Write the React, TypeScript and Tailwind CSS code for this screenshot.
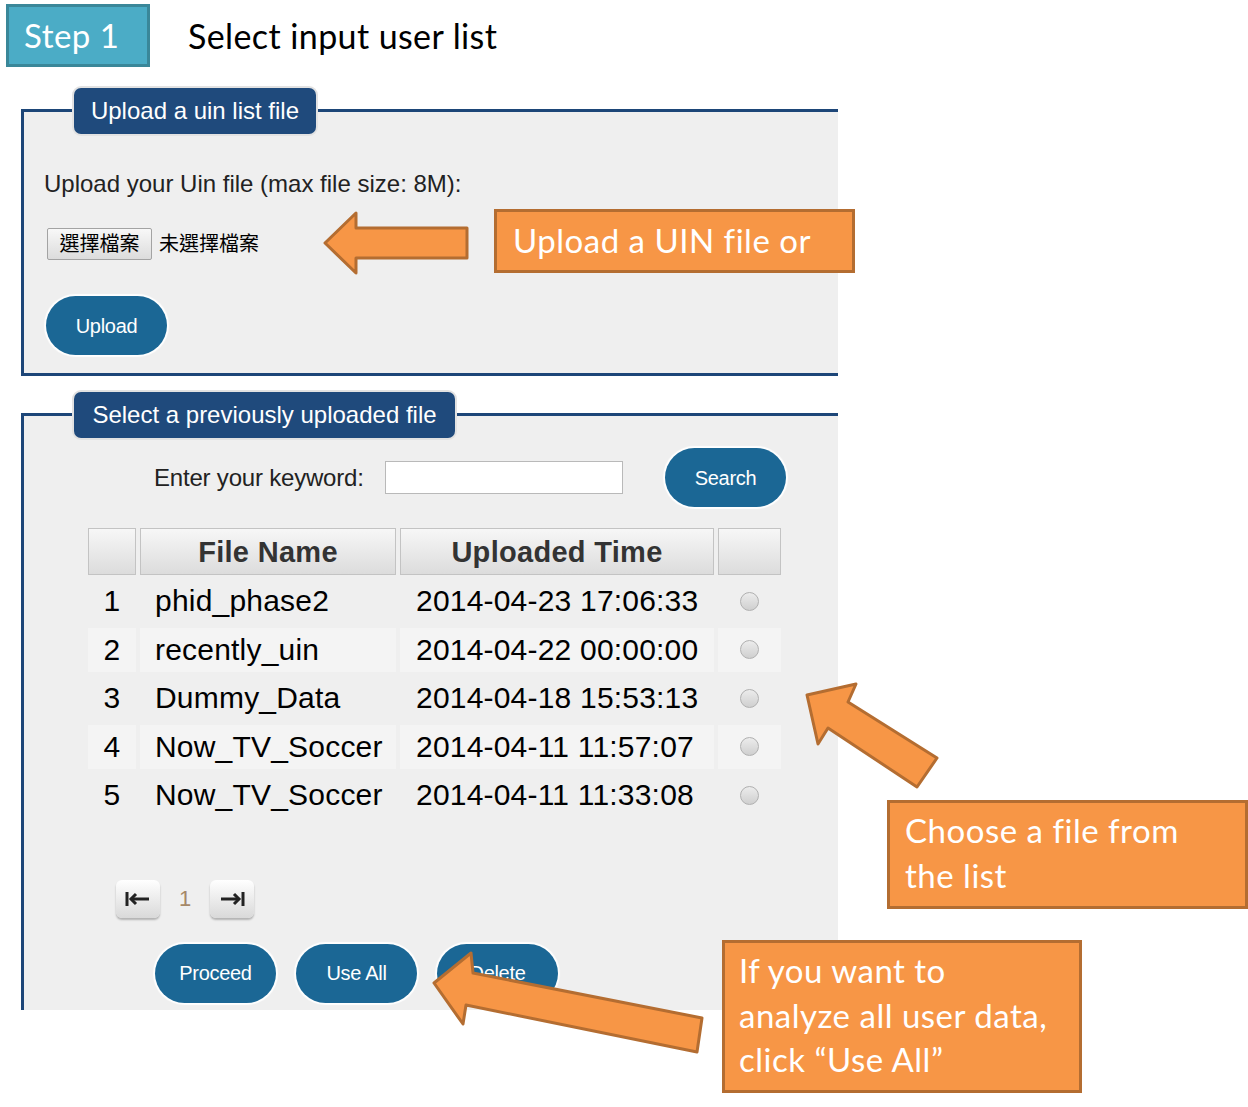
const rows = [
  ["1", "phid_phase2", "2014-04-23 17:06:33"],
  ["2", "recently_uin", "2014-04-22 00:00:00"],
  ["3", "Dummy_Data", "2014-04-18 15:53:13"],
  ["4", "Now_TV_Soccer", "2014-04-11 11:57:07"],
  ["5", "Now_TV_Soccer", "2014-04-11 11:33:08"],
];

function Pill({ label, className = "" }: { label: string; className?: string }) {
  return (
    <button
      className={
        "w-[121px] h-[59px] rounded-full bg-[#1b6795] text-white text-[20px] tracking-[-0.3px] shadow-[0_0_1px_2px_rgba(255,255,255,0.95)] " +
        className
      }
    >
      {label}
    </button>
  );
}

function Legend({ label, width }: { label: string; width: string }) {
  return (
    <div
      className={
        "ml-[50px] -mt-[24px] h-[46px] rounded-[7px] bg-[#1f4a7c] text-white text-[24px] flex items-center justify-center shadow-[0_0_0_2px_#e2e2e2] " +
        width
      }
    >
      {label}
    </div>
  );
}

function PageButton({ dir }: { dir: "first" | "last" }) {
  return (
    <div className="w-[44px] h-[38px] rounded-[6px] bg-linear-to-b from-[#ffffff] to-[#d9d9d9] shadow-[0_2px_2px_rgba(0,0,0,0.25)] flex items-center justify-center">
      <svg width="26" height="16" viewBox="0 0 26 16">
        {dir === "first" ? (
          <g stroke="#222" strokeWidth="3" fill="none">
            <path d="M2 1v14" />
            <path d="M6 8h18" />
            <path d="M11 3l-5 5 5 5" />
          </g>
        ) : (
          <g stroke="#222" strokeWidth="3" fill="none">
            <path d="M24 1v14" />
            <path d="M2 8h18" />
            <path d="M15 3l5 5-5 5" />
          </g>
        )}
      </svg>
    </div>
  );
}

function Callout({ lines, className }: { lines: string[]; className: string }) {
  return (
    <div
      className={
        "absolute bg-[#f79646] border-[3px] border-[#b46d31] text-white text-[33px] tracking-[0.5px] leading-[44.5px] font-['Lato',sans-serif] " +
        className
      }
    >
      {lines.map((l) => (
        <div key={l}>{l}</div>
      ))}
    </div>
  );
}

export default function App() {
  return (
    <div className="relative w-[1248px] h-[1107px] bg-white overflow-hidden font-['Liberation_Sans',Arial,sans-serif] text-[#222]">
      {/* step header */}
      <div className="flex items-center pt-[4px] pl-[6px]">
        <div className="w-[144px] h-[63px] bg-[#4bacc6] border-[3px] border-[#3a8799] flex items-center pl-[15px] text-white text-[33px] tracking-[0.5px] font-['Lato',sans-serif]">
          Step 1
        </div>
        <div className="ml-[38px] text-[34px] tracking-[0.4px] text-black font-['Lato',sans-serif]">Select input user list</div>
      </div>

      <div className="ml-[21px] w-[817px] mt-[42px]">
        {/* upload panel */}
        <div className="border-t-[3px] border-l-[3px] border-b-[3px] border-[#1d4678] bg-[#efefef] pb-[18px]">
          <Legend label="Upload a uin list file" width="w-[242px]" />
          <p className="ml-[20px] mt-[36px] text-[24px] leading-[28px]">
            Upload your Uin file (max file size: 8M):
          </p>
          <div className="flex items-center ml-[23px] mt-[30px] font-['Liberation_Sans','Noto_Sans_CJK_TC',sans-serif] text-[20px] text-black">
            <span className="w-[105px] h-[32px] flex items-center justify-center border border-[#a3a3a3] rounded-[2px] bg-linear-to-b from-[#f8f8f8] to-[#dcdcdc]">
              選擇檔案
            </span>
            <span className="ml-[7px]">未選擇檔案</span>
          </div>
          <Pill label="Upload" className="ml-[22px] mt-[36px] block" />
        </div>

        {/* previous files panel */}
        <div className="mt-[37px] border-t-[3px] border-l-[3px] border-[#1d4678] bg-[#efefef] pb-[7px]">
          <Legend label="Select a previously uploaded file" width="w-[381px]" />
          <div className="flex items-center ml-[130px] mt-[10px]">
            <span className="w-[211px] text-[24px] tracking-[-0.2px] whitespace-nowrap">Enter your keyword:</span>
            <div className="ml-[20px] w-[238px] h-[33px] bg-white border border-[#b9b9b9]" />
            <Pill label="Search" className="ml-[42px]" />
          </div>

          <table className="ml-[60px] mt-[17px] table-fixed border-separate border-spacing-[4px] text-black">
            <thead>
              <tr>
                {["w-[48px]", "w-[256px]", "w-[314px]", "w-[63px]"].map((w, i) => (
                  <th
                    key={w}
                    className={
                      w +
                      " h-[47px] p-0 border border-[#c3c3c3] bg-linear-to-b from-[#f7f7f7] to-[#dcdcdc] text-[29px] leading-[34px] tracking-[0.3px] font-bold text-[#333]"
                    }
                  >
                    {i === 1 ? "File Name" : i === 2 ? "Uploaded Time" : ""}
                  </th>
                ))}
              </tr>
            </thead>
            <tbody className="text-[30px] leading-[34px] tracking-[0.2px]">
              {rows.map(([n, name, time], i) => {
                const bg = i % 2 === 1 ? "bg-[#f4f4f4]" : "";
                return (
                  <tr key={n}>
                    <td className={"h-[44.5px] p-0 text-center " + bg}>{n}</td>
                    <td className={"p-0 pl-[15px] whitespace-nowrap " + bg}>{name}</td>
                    <td className={"p-0 pl-[16px] whitespace-nowrap " + bg}>{time}</td>
                    <td className={"p-0 " + bg}>
                      <div className="mx-auto w-[19px] h-[19px] rounded-full border border-[#b0b0b0] bg-linear-to-b from-[#ececec] to-[#cfcfcf]" />
                    </td>
                  </tr>
                );
              })}
            </tbody>
          </table>

          <div className="flex items-center ml-[92px] mt-[58px]">
            <PageButton dir="first" />
            <span className="ml-[19px] mr-[19px] text-[22px] text-[#a58868]">1</span>
            <PageButton dir="last" />
          </div>

          <div className="flex gap-[20px] ml-[131px] mt-[26px]">
            <Pill label="Proceed" />
            <Pill label="Use All" />
            <Pill label="Delete" />
          </div>
        </div>
      </div>

      {/* annotations */}
      <Callout lines={["Upload a UIN file or"]} className="left-[494px] top-[209px] w-[361px] h-[64px] pl-[16px] leading-[56px]" />
      <Callout lines={["Choose a file from", "the list"]} className="left-[887px] top-[800px] w-[361px] h-[109px] pl-[15px] pt-[5px]" />
      <Callout
        lines={["If you want to", "analyze all user data,", "click “Use All”"]}
        className="left-[722px] top-[940px] w-[360px] h-[153px] pl-[14px] pt-[5px]"
      />

      <svg className="absolute left-0 top-0 pointer-events-none" width="1248" height="1107">
        <g fill="#f79646" stroke="#b46d31" strokeWidth="3" strokeLinejoin="round">
          <polygon points="325,243 356,213 356,228 467,228 467,258 356,258 356,273" />
          <polygon points="807,695 856,684 848,702 937,758 917,787 828,728 818,744" />
          <polygon points="434,983 471,953 473,973 702,1018 697,1052 466,1005 463,1024" />
        </g>
      </svg>
    </div>
  );
}
